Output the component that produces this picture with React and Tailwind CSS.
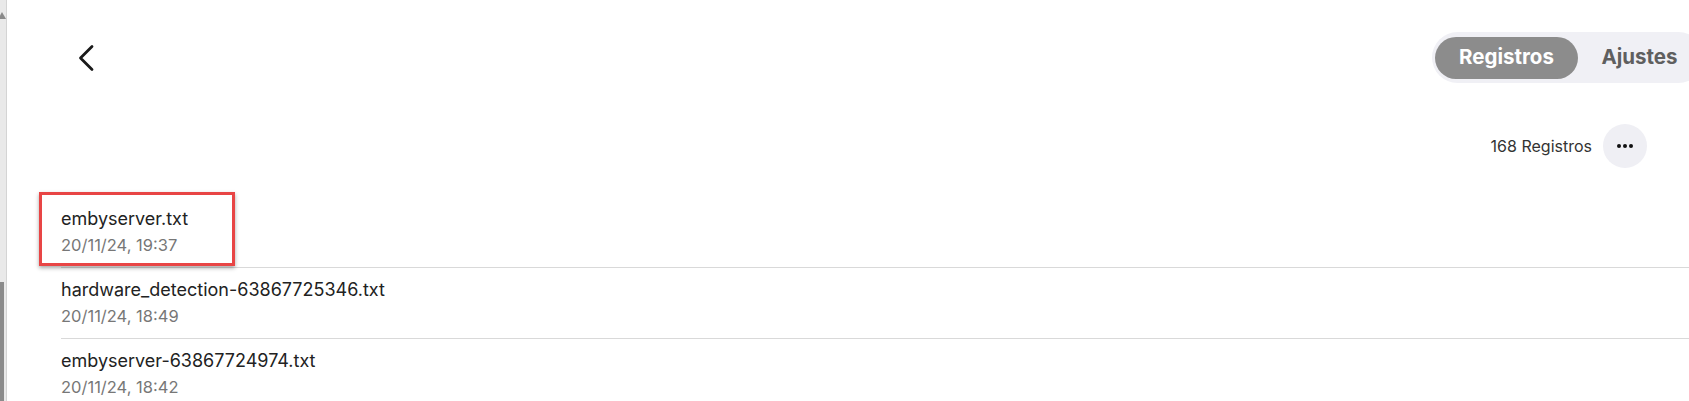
import React from "react";

const rows = [
  { name: "embyserver.txt", date: "20/11/24, 19:37" },
  { name: "hardware_detection-63867725346.txt", date: "20/11/24, 18:49" },
  { name: "embyserver-63867724974.txt", date: "20/11/24, 18:42" },
];

export default function App() {
  return (
    <div
      className="relative flex w-[1689px] h-[401px] overflow-hidden bg-white"
      style={{ fontFamily: "Inter, 'Noto Sans', sans-serif" }}
    >
      {/* left scrollbar strip */}
      <div className="relative w-[7px] h-full bg-[#e9e9e9] border-r border-[#d4d4d4] flex flex-col">
        <div className="h-[12px]" />
        <div className="w-0 h-0 border-l-[4px] border-r-[4px] border-b-[7px] border-l-transparent border-r-transparent border-b-[#8a8a8a] -ml-[2px]" />
        <div className="h-[263px]" />
        <div className="w-[4px] flex-1 bg-[#8b8b8b]" />
      </div>

      {/* main */}
      <div className="flex-1 flex flex-col min-w-0">
        {/* header */}
        <div className="flex items-center justify-between pt-[32px] h-[83px]">
          <button className="ml-[70px] w-[18px] h-[28px] flex items-center justify-center">
            <svg width="18" height="28" viewBox="0 0 18 28" fill="none">
              <polyline
                points="15,2.5 3.5,14 15,25.5"
                stroke="#1a1a1a"
                strokeWidth="2.8"
                strokeLinecap="round"
                strokeLinejoin="round"
              />
            </svg>
          </button>
          <div className="flex items-center h-[51px] w-[272px] shrink-0 -mr-[15px] rounded-full bg-[#f0f0f5] p-[3px]">
            <div className="h-[42px] w-[143px] rounded-full bg-[#8c8c8c] flex items-center justify-center text-white font-bold text-[20.5px]">
              Registros
            </div>
            <div className="h-[42px] flex-1 flex items-center justify-center text-[#5f5f5f] font-bold text-[20.5px]">
              Ajustes
            </div>
          </div>
        </div>

        {/* count row */}
        <div className="flex items-center justify-end mt-[41px] h-[44px] pr-[42px] gap-[11px]">
          <span className="text-[16px] text-[#333]">168 Registros</span>
          <button className="w-[44px] h-[44px] rounded-full bg-[#efeff4] flex items-center justify-center gap-[2px]">
            <span className="w-[4px] h-[4px] rounded-full bg-[#111]" />
            <span className="w-[4px] h-[4px] rounded-full bg-[#111]" />
            <span className="w-[4px] h-[4px] rounded-full bg-[#111]" />
          </button>
        </div>

        {/* list */}
        <div className="mt-[29px] pl-[54px]">
          {rows.map((r, i) => (
            <div
              key={i}
              className={`flex flex-col pt-[10px] ${i > 0 ? "h-[71px] border-t border-[#d9d9d9]" : "h-[70px]"}`}
            >
              <div className="text-[18px] leading-[24px] text-[#222]">{r.name}</div>
              <div className="text-[16.5px] leading-[22px] mt-[3px] text-[#777]">{r.date}</div>
            </div>
          ))}
        </div>
      </div>

      {/* annotation box */}
      <div className="absolute left-[39px] top-[192px] w-[196px] h-[74px] border-[3px] border-[#e84545] shadow-[0_2px_4px_rgba(0,0,0,0.35)]" />
    </div>
  );
}
